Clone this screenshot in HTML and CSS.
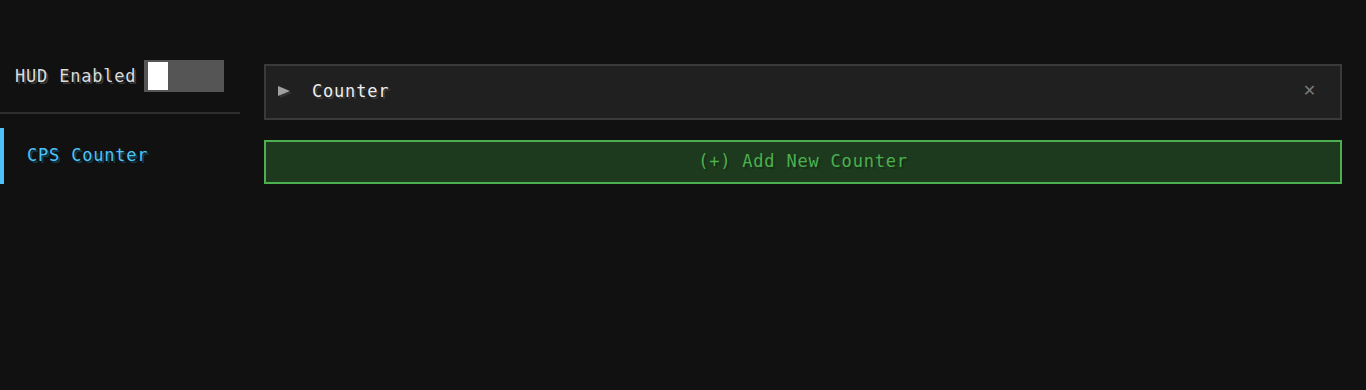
FILE: index.html
```html
<!DOCTYPE html>
<html>
<head>
<meta charset="utf-8">
<link rel="stylesheet" href="styles.css">
</head>
<body>
<div class="app">
  <aside class="sidebar">
    <div class="hud-row">
      <span class="label">HUD Enabled</span>
      <span class="toggle"><span class="knob"></span></span>
    </div>
    <div class="divider"></div>
    <div class="nav-item active">CPS Counter</div>
  </aside>
  <main class="main">
    <div class="card">
      <span class="arrow"></span>
      <span class="card-title">Counter</span>
      <span class="close">&#x2715;</span>
    </div>
    <button class="add-btn">(+) Add New Counter</button>
  </main>
</div>
</body>
</html>
```
FILE: styles.css
```css
* { box-sizing: border-box; }
html, body { margin: 0; padding: 0; background: #111111; height: 100%; }
body {
  font-family: "DejaVu Sans Mono", "Liberation Mono", monospace;
  font-size: 17px;
  letter-spacing: 0.8px;
  color: #e0e0e0;
}
.app { display: flex; height: 390px; }
.sidebar { width: 240px; flex: none; padding-top: 60px; }
.hud-row { display: flex; align-items: center; padding-left: 15px; gap: 8px; height: 32px; }
.label { color: #dcdcdc; text-shadow: 2px 2px 0 #3a3a3a; }
.toggle { width: 80px; height: 32px; background: #555555; padding: 2px 4px; display: flex; }
.knob { width: 20px; height: 28px; background: #ffffff; }
.divider { height: 2px; background: #2e2e2e; margin-top: 20px; }
.nav-item { height: 56px; margin-top: 14px; display: flex; align-items: center; padding-left: 27px; padding-bottom: 3px; }
.nav-item.active { border-left: 4px solid #4fc3f7; padding-left: 23px; color: #4fc3f7; text-shadow: 2px 2px 0 #123d4f; }
.main { flex: 1; padding: 64px 24px 0 24px; display: flex; flex-direction: column; gap: 20px; }
.card { height: 56px; border: 2px solid #3a3a3a; background: #202020; display: flex; align-items: center; padding: 0 20px 3px 12px; }
.arrow { width: 0; height: 0; border-top: 5px solid transparent; border-bottom: 5px solid transparent; border-left: 12px solid #a0a0a0; margin-right: 22px; filter: drop-shadow(2px 2px 0 #333); }
.card-title { flex: 1; color: #eeeeee; text-shadow: 2px 2px 0 #3a3a3a; }
.close { color: #7a7a7a; font-size: 16px; font-family: "DejaVu Sans", sans-serif; margin-right: 3px; }
.add-btn { height: 44px; border: 2px solid #4caf50; background: #1e3a1e; color: #4caf50; font: inherit; letter-spacing: inherit; text-shadow: 2px 2px 0 #153015; padding: 0 0 2px; cursor: pointer; }
```
